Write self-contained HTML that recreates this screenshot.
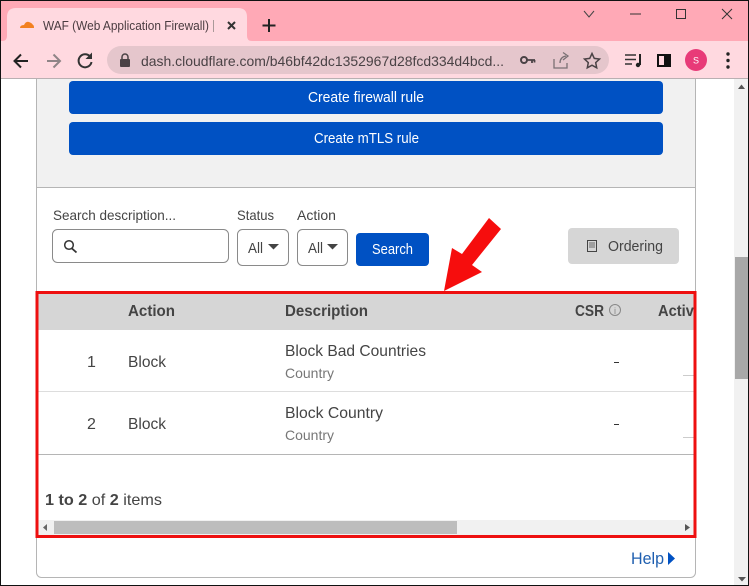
<!DOCTYPE html>
<html><head><meta charset="utf-8"><style>
html,body{margin:0;padding:0;background:#fff;width:749px;height:586px;overflow:hidden}
svg{display:block}
text{font-family:"Liberation Sans",sans-serif;fill:#444}
</style></head><body>
<svg width="749" height="586" viewBox="0 0 749 586" xmlns="http://www.w3.org/2000/svg">
<rect width="749" height="586" fill="#fff"/>
<!-- scrollbar -->
<rect x="734" y="79" width="15" height="507" fill="#f1f1f1"/>
<rect x="735" y="257" width="14" height="122" fill="#a8a8a8"/>
<path d="M741.500 84.500L745 89H738Z" fill="#555"/>
<path d="M738 577H746L742 581.500Z" fill="#555"/>
<!-- card -->
<rect x="36.500" y="60" width="659" height="517.500" rx="5" fill="#fff" stroke="#b5b5b5"/>
<rect x="37" y="79" width="658" height="108" fill="#f1f1f1"/>
<rect x="37" y="187" width="658" height="1" fill="#b5b5b5"/>
<rect x="69" y="81" width="594" height="33" rx="4" fill="#0051c3"/>
<rect x="69" y="122" width="594" height="33" rx="4" fill="#0051c3"/>
<text x="308" y="102" font-size="14.500" textLength="116" lengthAdjust="spacingAndGlyphs" style="fill:#fff">Create firewall rule</text>
<text x="314" y="143" font-size="14.500" textLength="105" lengthAdjust="spacingAndGlyphs" style="fill:#fff">Create mTLS rule</text>
<!-- filters -->
<text x="53" y="220" font-size="14" textLength="123" lengthAdjust="spacingAndGlyphs">Search description...</text>
<text x="237" y="220" font-size="14" textLength="37" lengthAdjust="spacingAndGlyphs">Status</text>
<text x="297" y="220" font-size="14" textLength="39" lengthAdjust="spacingAndGlyphs">Action</text>
<rect x="52.500" y="229.500" width="176" height="33" rx="5" fill="#fff" stroke="#8a8a8a"/>
<circle cx="69" cy="245" r="4.300" fill="none" stroke="#333" stroke-width="1.500"/><path d="M72 248.500L76.500 252.500" stroke="#333" stroke-width="1.800"/>
<rect x="237.500" y="229.500" width="51" height="36" rx="5" fill="#fff" stroke="#8a8a8a"/>
<rect x="297.500" y="229.500" width="50" height="36" rx="5" fill="#fff" stroke="#8a8a8a"/>
<text x="248" y="253" font-size="14.500" textLength="15" lengthAdjust="spacingAndGlyphs">All</text>
<text x="308" y="253" font-size="14.500" textLength="15" lengthAdjust="spacingAndGlyphs">All</text>
<path d="M268 244H279L273.500 249.500Z" fill="#444"/>
<path d="M327 244H338L332.500 249.500Z" fill="#444"/>
<rect x="356" y="233" width="73" height="33" rx="4" fill="#0051c3"/>
<text x="372" y="254" font-size="14.500" textLength="41" lengthAdjust="spacingAndGlyphs" style="fill:#fff">Search</text>
<rect x="568" y="228" width="111" height="36" rx="4" fill="#d6d6d6"/>
<rect x="587.500" y="240.500" width="9" height="11" fill="none" stroke="#444"/><path d="M589 243H595M589 245H595M589 247H595" stroke="#444" stroke-width=".8"/>
<text x="608" y="251" font-size="14.500" textLength="55" lengthAdjust="spacingAndGlyphs">Ordering</text>
<!-- table -->
<rect x="38" y="294" width="657" height="36" fill="#d6d6d6"/>
<text x="128" y="316" font-size="15.500" font-weight="700" textLength="47" lengthAdjust="spacingAndGlyphs">Action</text>
<text x="285" y="316" font-size="15.500" font-weight="700" textLength="83" lengthAdjust="spacingAndGlyphs">Description</text>
<text x="575" y="316" font-size="15.500" font-weight="700" textLength="29" lengthAdjust="spacingAndGlyphs">CSR</text>
<circle cx="615" cy="310" r="5.500" fill="none" stroke="#888"/><text x="615" y="314" font-size="9" text-anchor="middle" style="fill:#888">i</text>
<svg x="650" y="296" width="44" height="32"><text x="8" y="20" font-size="15.500" font-weight="700" textLength="44" lengthAdjust="spacingAndGlyphs">Active</text></svg>
<text x="87" y="367" font-size="16">1</text>
<text x="87" y="429" font-size="16">2</text>
<text x="128" y="367" font-size="16" textLength="38" lengthAdjust="spacingAndGlyphs">Block</text>
<text x="128" y="429" font-size="16" textLength="38" lengthAdjust="spacingAndGlyphs">Block</text>
<text x="285" y="356" font-size="16" textLength="141" lengthAdjust="spacingAndGlyphs">Block Bad Countries</text>
<text x="285" y="418" font-size="16" textLength="98" lengthAdjust="spacingAndGlyphs">Block Country</text>
<text x="285" y="378" font-size="14" textLength="49" lengthAdjust="spacingAndGlyphs" style="fill:#777">Country</text>
<text x="285" y="440" font-size="14" textLength="49" lengthAdjust="spacingAndGlyphs" style="fill:#777">Country</text>
<rect x="614" y="362" width="5" height="1" fill="#333"/>
<rect x="614" y="424" width="5" height="1" fill="#333"/>
<rect x="683" y="375" width="12" height="1" fill="#ccc"/>
<rect x="683" y="437" width="12" height="1" fill="#ccc"/>
<rect x="38" y="391" width="657" height="1" fill="#ddd"/>
<rect x="38" y="454" width="657" height="1" fill="#b5b5b5"/>
<text x="45" y="505" font-size="16" textLength="117" lengthAdjust="spacingAndGlyphs"><tspan font-weight="700">1 to 2</tspan> of <tspan font-weight="700">2</tspan> items</text>
<rect x="38" y="520" width="657" height="15" fill="#f1f1f1"/>
<rect x="54" y="521" width="403" height="13" fill="#bdbdbd"/>
<path d="M47 524V531L43 527.500Z" fill="#666"/>
<path d="M685 524V531L690 527.500Z" fill="#555"/>
<!-- red frame -->
<rect x="37" y="292.500" width="658" height="244" fill="none" stroke="#ee1010" stroke-width="3"/>
<!-- arrow -->
<path d="M489 218L501 229L472 265L482 272L444 291L452 248L462 254Z" fill="#f60d0d"/>
<!-- help -->
<text x="631" y="564" font-size="16.500" textLength="33" lengthAdjust="spacingAndGlyphs" style="fill:#1f5fb0">Help</text>
<path d="M668 552L675 558.500L668 565Z" fill="#0051c3"/>
<!-- chrome -->
<rect width="749" height="42" fill="#ffa9b6"/>
<rect y="41" width="749" height="38" fill="#ffd9e0"/>
<path d="M0 41H2Q7 41 7 36V17Q7 8 16 8H238Q247 8 247 17V36Q247 41 252 41H0Z" fill="#ffd9e0"/>
<rect y="78" width="749" height="1" fill="#b9b0b2"/>
<path d="M20 28Q20 25 24 25Q26 21 29 22Q32 23 33 25Q34 25 34 28Z" fill="#f38020"/>
<text x="43" y="30" font-size="12.500" textLength="166" lengthAdjust="spacingAndGlyphs" style="fill:#4a3c40">WAF (Web Application Firewall)</text>
<rect x="213" y="20" width="1" height="12" fill="#a99"/>
<path d="M228 22L235 29M235 22L228 29" stroke="#333" stroke-width="2"/>
<path d="M269 19V32M262.500 25.500H275.500" stroke="#222" stroke-width="2"/>
<path d="M28 61H15M21 54.500L14.500 61L21 67.500" stroke="#222" stroke-width="2" fill="none"/>
<path d="M60 61H47M53.500 54.500L60 61L53.500 67.500" stroke="#8f8487" stroke-width="2" fill="none"/>
<path d="M90 56.500A6.500 6.500 0 1 0 91.500 62" stroke="#333" stroke-width="2" fill="none"/><path d="M92 52.500V59H85.500Z" fill="#333"/>
<rect x="107" y="46" width="502" height="28" rx="14" fill="#e5c6cc"/>
<rect x="120" y="59" width="10" height="8" rx="1" fill="#4a4245"/><path d="M122 59V57A3 3 0 0 1 128 57V59" stroke="#4a4245" stroke-width="1.500" fill="none"/>
<text x="141" y="66" font-size="14" textLength="363" lengthAdjust="spacingAndGlyphs" style="fill:#4a4245">dash.cloudflare.com/b46bf42dc1352967d28fcd334d4bcd...</text>
<circle cx="524" cy="60" r="3" fill="none" stroke="#4a4245" stroke-width="2"/><path d="M527 60H535M532 60V63M534.500 60V62.500" stroke="#4a4245" stroke-width="1.800" fill="none"/>
<path d="M554 59V68H567V63M560 63Q560 57 566 56M563 52.500L568 56L563 60" stroke="#7a7074" stroke-width="1.300" fill="none"/>
<path d="M592 53.500L594.300 58.400L599.500 59L595.700 62.600L596.700 67.800L592 65.200L587.300 67.800L588.300 62.600L584.500 59L589.700 58.400Z" stroke="#4a4245" stroke-width="1.500" fill="none"/>
<path d="M625 55H636M625 59.500H636M625 64H632" stroke="#333" stroke-width="1.600"/><path d="M640 54V65" stroke="#222" stroke-width="2"/><circle cx="638" cy="65" r="2.200" fill="#222"/>
<rect x="658" y="55" width="12" height="11" fill="none" stroke="#111" stroke-width="2"/><rect x="664" y="55" width="6" height="11" fill="#111"/>
<circle cx="696" cy="60" r="11" fill="#e83a78"/>
<text x="696" y="63.500" font-size="9" text-anchor="middle" style="fill:#fff">S</text>
<circle cx="728" cy="54" r="1.700" fill="#222"/><circle cx="728" cy="60.500" r="1.700" fill="#222"/><circle cx="728" cy="67" r="1.700" fill="#222"/>
<path d="M584 11L589 17L594 11" stroke="#444" fill="none"/>
<rect x="630" y="13.500" width="11" height="1" fill="#333"/>
<rect x="676.500" y="9.500" width="9" height="9" fill="none" stroke="#333"/>
<path d="M722 9L732 19M732 9L722 19" stroke="#333"/>
<!-- frame -->
<rect x="0.500" y="0.500" width="748" height="585" fill="none" stroke="#111"/>
</svg>
</body></html>
